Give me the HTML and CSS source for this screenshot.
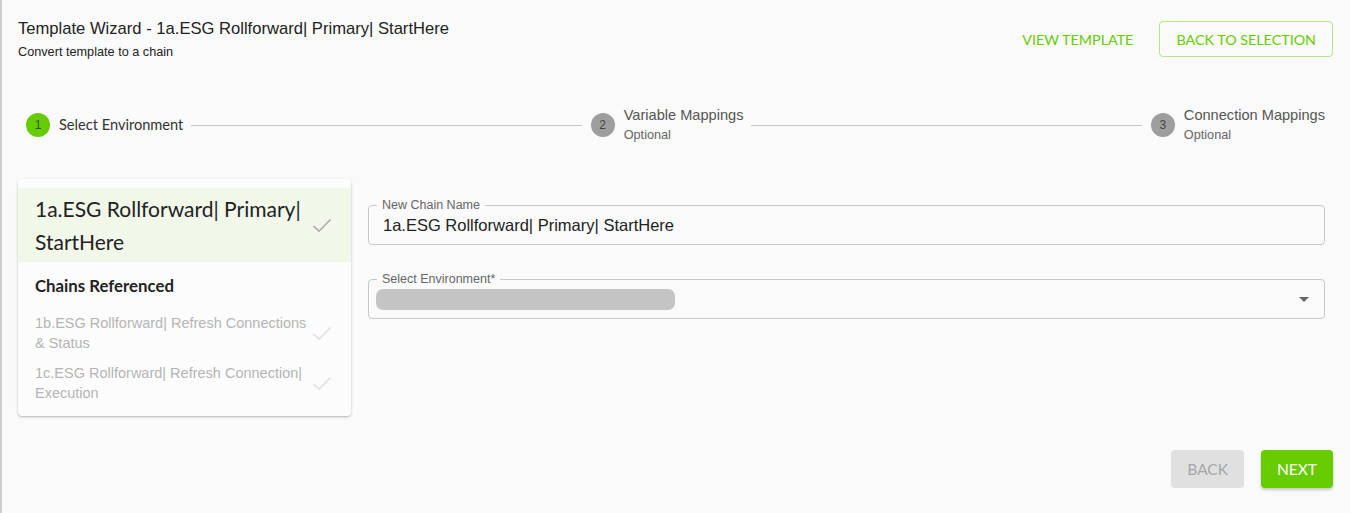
FILE: index.html
```html
<!DOCTYPE html>
<html lang="en">
<head>
<meta charset="utf-8">
<title>Template Wizard</title>
<link rel="stylesheet" href="styles.css">
</head>
<body>
<div class="page">
  <header class="header">
    <div class="heading">
      <h1 class="title">Template Wizard - 1a.ESG Rollforward| Primary| StartHere</h1>
      <p class="subtitle">Convert template to a chain</p>
    </div>
    <div class="header-actions">
      <button class="btn-text">VIEW TEMPLATE</button>
      <button class="btn-outline">BACK TO SELECTION</button>
    </div>
  </header>

  <div class="stepper">
    <div class="step">
      <span class="step-circle active">1</span>
      <span class="step-label active-label">Select Environment</span>
    </div>
    <div class="connector"></div>
    <div class="step">
      <span class="step-circle">2</span>
      <div class="step-text">
        <span class="step-label">Variable Mappings</span>
        <span class="step-optional">Optional</span>
      </div>
    </div>
    <div class="connector"></div>
    <div class="step">
      <span class="step-circle">3</span>
      <div class="step-text">
        <span class="step-label">Connection Mappings</span>
        <span class="step-optional">Optional</span>
      </div>
    </div>
  </div>

  <main class="main">
    <section class="card">
      <div class="card-head">
        <span class="card-title">1a.ESG Rollforward| Primary| StartHere</span>
        <svg class="check" width="20" height="15" viewBox="0 0 20 15"><polyline points="1.5,8 7,13.2 18.5,1.5" fill="none" stroke="#a9a9a9" stroke-width="1.6"/></svg>
      </div>
      <h2 class="section-title">Chains Referenced</h2>
      <div class="chain-item">
        <span class="chain-name">1b.ESG Rollforward| Refresh Connections &amp; Status</span>
        <svg class="check" width="20" height="15" viewBox="0 0 20 15"><polyline points="1.5,8 7,13.2 18.5,1.5" fill="none" stroke="#e0e0e0" stroke-width="1.6"/></svg>
      </div>
      <div class="chain-item">
        <span class="chain-name">1c.ESG Rollforward| Refresh Connection| Execution</span>
        <svg class="check" width="20" height="15" viewBox="0 0 20 15"><polyline points="1.5,8 7,13.2 18.5,1.5" fill="none" stroke="#e0e0e0" stroke-width="1.6"/></svg>
      </div>
    </section>

    <form class="form">
      <fieldset class="field">
        <legend class="field-label">New Chain Name</legend>
        <div class="field-value">1a.ESG Rollforward| Primary| StartHere</div>
      </fieldset>
      <fieldset class="field">
        <legend class="field-label">Select Environment*</legend>
        <div class="field-select">
          <span class="pill"></span>
          <span class="arrow"></span>
        </div>
      </fieldset>
    </form>
  </main>

  <footer class="footer">
    <button class="btn-back">BACK</button>
    <button class="btn-next">NEXT</button>
  </footer>
</div>
</body>
</html>
```

FILE: styles.css
```css
* { box-sizing: border-box; }

html, body {
  margin: 0;
  height: 100%;
}

body {
  background: #fafafa;
  border-left: 2px solid #cfcfcf;
  font-family: "Liberation Sans", Arial, sans-serif;
  color: #222;
}

.page {
  padding: 18px 17px 0 16px;
}

button {
  font-family: Lato, "Liberation Sans", sans-serif;
  cursor: pointer;
}

/* Header */
.header {
  display: flex;
  justify-content: space-between;
  align-items: flex-start;
}

.title {
  margin: 0;
  font-size: 16.6px;
  line-height: 22px;
  font-weight: 400;
  color: #222;
}

.subtitle {
  margin: 4px 0 0;
  font-size: 12.7px;
  line-height: 16px;
  color: #222;
}

.header-actions {
  display: flex;
  align-items: center;
  gap: 10px;
  padding-top: 3px;
}

.btn-text {
  background: none;
  border: none;
  color: #66cc00;
  font-size: 14.3px;
  padding: 0 16px;
  height: 36px;
}

.btn-outline {
  background: none;
  border: 1px solid #b6e48a;
  border-radius: 4px;
  color: #66cc00;
  font-size: 14.3px;
  height: 36px;
  padding: 0 16px;
}

/* Stepper */
.stepper {
  display: flex;
  align-items: center;
  margin-top: 45px;
  padding: 0 8px 0 8px;
  height: 40px;
}

.step {
  display: flex;
  align-items: center;
  gap: 9px;
}

.step-circle {
  width: 24px;
  height: 24px;
  border-radius: 50%;
  background: #9e9e9e;
  color: #444;
  font-size: 12px;
  display: flex;
  align-items: center;
  justify-content: center;
  flex: none;
}

.step-circle.active {
  background: #66cc00;
  color: #2f5a00;
}

.step-text {
  display: flex;
  flex-direction: column;
}

.step-label {
  font-size: 14.6px;
  line-height: 20px;
  color: #555;
}

.active-label {
  font-family: Lato, sans-serif;
  color: #333;
}

.step-optional {
  font-size: 12.7px;
  line-height: 20px;
  color: #666;
}

.connector {
  flex: 1;
  height: 1px;
  background: #c8c8c8;
  margin: 0 9px 0 8px;
}

/* Main */
.main {
  display: flex;
  align-items: flex-start;
  gap: 17px;
  margin-top: 34px;
}

.card {
  width: 333px;
  flex: none;
  background: #fcfcfc;
  border-radius: 4px;
  box-shadow: 0 1px 3px rgba(0,0,0,0.22), 0 1px 1px rgba(0,0,0,0.08);
  padding: 9px 0 13px;
}

.card-head {
  display: flex;
  align-items: center;
  justify-content: space-between;
  background: #f1f8ea;
  padding: 4px 19px 4px 17px;
}

.card-title {
  font-family: Lato, sans-serif;
  font-size: 21px;
  line-height: 33px;
  color: #222;
  width: 275px;
}

.check {
  flex: none;
  display: block;
}

.section-title {
  margin: 14px 0 0;
  padding: 0 17px;
  font-family: Lato, sans-serif;
  font-weight: 700;
  font-size: 16.8px;
  line-height: 20px;
  color: #222;
}

.chain-item {
  display: flex;
  align-items: center;
  justify-content: space-between;
  padding: 0 19px 0 17px;
  margin-top: 10px;
}

.section-title + .chain-item {
  margin-top: 17px;
}

.chain-name {
  width: 282px;
  font-size: 14.5px;
  line-height: 20px;
  color: #b5b5b5;
}

/* Form */
.form {
  flex: 1;
  padding: 19px 8px 0 0;
  display: flex;
  flex-direction: column;
  gap: 27px;
}

.field {
  margin: 0;
  padding: 0 15px 0 8px;
  border: 1px solid #c8c8c8;
  border-radius: 4px;
  min-width: 0;
}

.field-label {
  padding: 0 5px;
  font-size: 12.5px;
  line-height: 14px;
  color: #666;
}

.field-value {
  padding: 3px 0 9px 6px;
  font-size: 16.5px;
  line-height: 20px;
  color: #222;
}

.field-select {
  display: flex;
  align-items: center;
  justify-content: space-between;
  padding: 3px 0 8px;
}

.pill {
  display: block;
  width: 299px;
  height: 21px;
  border-radius: 7px;
  background: #c4c4c4;
  margin-left: -1px;
}

.arrow {
  width: 0;
  height: 0;
  border-left: 5px solid transparent;
  border-right: 5px solid transparent;
  border-top: 5px solid #666;
}

/* Footer */
.footer {
  display: flex;
  justify-content: flex-end;
  gap: 17px;
  margin-top: 34px;
}

.btn-back,
.btn-next {
  height: 38px;
  border: none;
  border-radius: 4px;
  font-size: 15.5px;
  padding: 0 16px;
}

.btn-back {
  background: #e0e0e0;
  color: #a6a6a6;
}

.btn-next {
  background: #66cc00;
  color: #fff;
  box-shadow: 0 2px 3px rgba(0,0,0,0.2);
}
```
